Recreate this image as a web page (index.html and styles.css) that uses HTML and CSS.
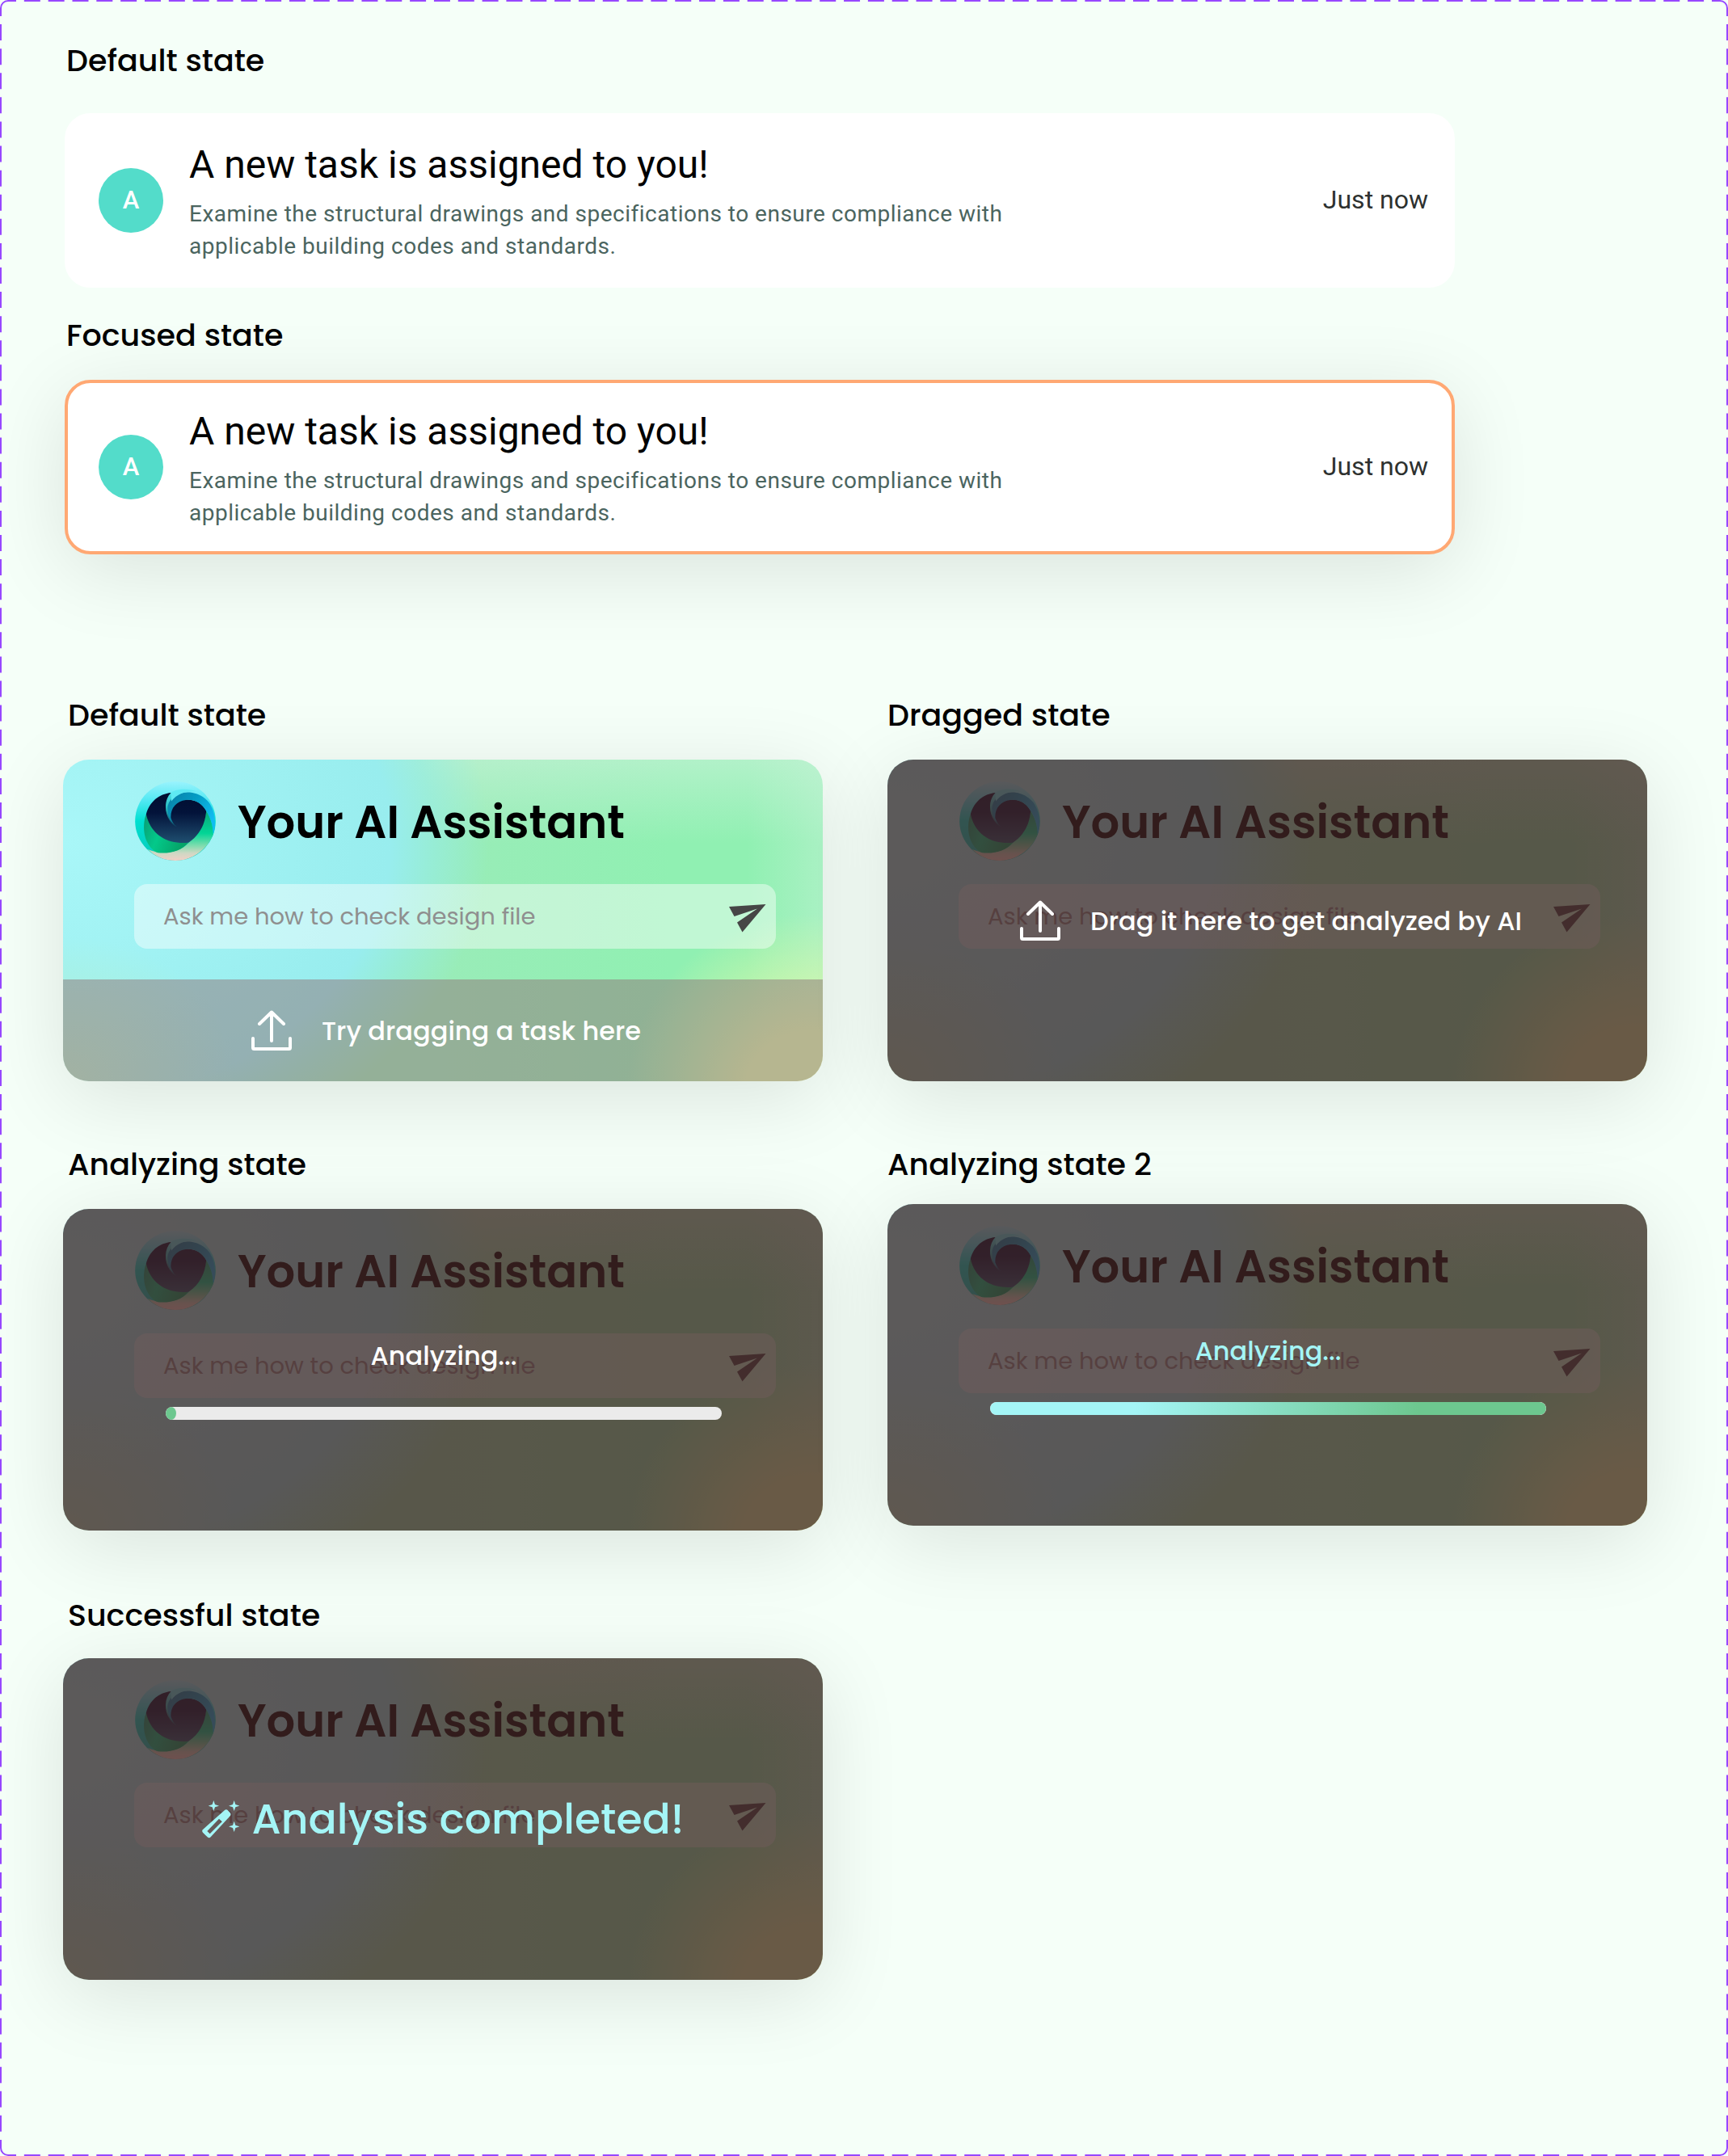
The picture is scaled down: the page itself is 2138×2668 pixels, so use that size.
FILE: index.html
```html
<!DOCTYPE html>
<html lang="en">
<head>
  <meta charset="UTF-8">
  <meta name="viewport" content="width=device-width, initial-scale=1">
  <title>AI Assistant states</title>
  <link rel="stylesheet" href="styles.css">
</head>
<body>
  <!-- Shared icons -->
  <svg class="sprite" aria-hidden="true">
    <defs>
      <linearGradient id="ring" x1="0" y1="0" x2="0" y2="1">
        <stop offset="0" stop-color="#9af3fd"></stop>
        <stop offset="0.25" stop-color="#4fe8f2"></stop>
        <stop offset="0.5" stop-color="#00e0d0"></stop>
        <stop offset="1" stop-color="#08c8b8"></stop>
      </linearGradient>
      <linearGradient id="wave" x1="0" y1="0" x2="1" y2="0.6">
        <stop offset="0" stop-color="#0a7fa6"></stop>
        <stop offset="0.5" stop-color="#049cc4"></stop>
        <stop offset="1" stop-color="#10bdf2"></stop>
      </linearGradient>
      <linearGradient id="leaf" x1="0" y1="0" x2="0" y2="1">
        <stop offset="0" stop-color="#08a878"></stop>
        <stop offset="0.45" stop-color="#02d596"></stop>
        <stop offset="0.7" stop-color="#7fdcae"></stop>
        <stop offset="0.85" stop-color="#cfd8c4"></stop>
        <stop offset="1" stop-color="#f2d0c6"></stop>
      </linearGradient>
      <linearGradient id="leafInner" x1="0" y1="0" x2="1" y2="0.35">
        <stop offset="0" stop-color="#0a9c74"></stop>
        <stop offset="0.45" stop-color="#03c98a"></stop>
        <stop offset="1" stop-color="#05a468"></stop>
      </linearGradient>
      <linearGradient id="navy" x1="0" y1="0" x2="0" y2="1">
        <stop offset="0" stop-color="#000d30"></stop>
        <stop offset="0.4" stop-color="#03133a"></stop>
        <stop offset="1" stop-color="#1f4f70"></stop>
      </linearGradient>
      <linearGradient id="sliver" x1="0" y1="0" x2="0" y2="1">
        <stop offset="0" stop-color="#4fe6ee"></stop>
        <stop offset="0.5" stop-color="#22b5b8"></stop>
        <stop offset="1" stop-color="#0b3a58"></stop>
      </linearGradient>
    </defs>

    <symbol id="logo" viewBox="51 22 300 295">
      <ellipse cx="201" cy="169.500" rx="150" ry="147.500" fill="url(#ring)"></ellipse>
      <path d="M316 132 C334 160 341 190 342 219 C320 275 265 317 201 317 C160 317 125 302 98 275 C150 296 215 290 250 250 C290 215 312 175 316 132 Z" fill="url(#leaf)"></path>
      <path d="M92 145 C80 175 80 225 100 255 C110 272 124 284 136 288 C185 292 222 280 250 250 C175 252 118 215 92 145 Z" fill="url(#leafInner)"></path>
      <path d="M185 64 C140 68 104 98 92 145 C108 215 165 258 250 250 C292 222 312 180 316 132 C300 102 272 88 240 90 C205 92 180 120 184 160 L206 191 Z" fill="url(#navy)"></path>
      <path d="M185 64 C160 88 158 135 180 168 C188 180 197 188 206 191 C190 178 172 150 175 118 C180 90 205 70 240 62 L185 64 Z" fill="url(#sliver)"></path>
      <path d="M206 191 C182 172 168 142 173 112 C181 78 220 60 255 63 C285 66 308 80 326 100 C347 130 356 175 342 219 C341 188 334 160 316 132 C300 102 272 88 240 91 C204 95 182 122 184 158 C188 172 196 184 206 191 Z" fill="url(#wave)"></path>
      <path d="M185 64 C200 50 250 46 280 60 C250 56 210 64 186 96 Z" fill="#5eeaf3"></path>
    </symbol>

    <symbol id="send" viewBox="0 0 46 35">
      <path d="M0 3 L45.500 0 L16.500 34.500 L10 22.500 L35 5.500 L6.500 15 Z" fill="currentColor"></path>
    </symbol>

    <symbol id="upload" viewBox="0 0 50 50">
      <path d="M25 38 V2.500 M10 17 L25 2.500 L40 17 M2 35 V46.500 Q2 48 3.500 48 H46.500 Q48 48 48 46.500 V35" fill="none" stroke="currentColor" stroke-width="4" stroke-linecap="round" stroke-linejoin="round"></path>
    </symbol>

    <symbol id="wand" viewBox="59 53 138 141">
      <path fill="currentColor" fill-rule="evenodd" d="M143 89 Q149 84 154 89 L163 99 Q168 105 163 111 L91 189 Q85 195 79 189 L62 172 Q57 166 62 161 Z M122 121 L78 167 L88 177 L133 132 Z"></path>
      <path fill="currentColor" d="M102 53 L107 68 L122 73 L107 78 L102 92 L97 78 L82 73 L97 68 Z M178 53 L183 68 L198 73 L183 78 L178 92 L173 78 L158 73 L173 68 Z M178 130 L183 145 L198 150 L183 155 L178 170 L173 155 L158 150 L173 145 Z"></path>
    </symbol>
  </svg>

  <main class="board">
    <svg class="outline" viewBox="0 0 2138 2668">
      <line x1="10" y1="1" x2="2128" y2="1" stroke-dasharray="20 9.830" stroke-dashoffset="10"></line>
      <line x1="10" y1="2667" x2="2128" y2="2667" stroke-dasharray="20 9.830" stroke-dashoffset="10"></line>
      <line x1="1" y1="10" x2="1" y2="2658" stroke-dasharray="20 10.090" stroke-dashoffset="10"></line>
      <line x1="2137" y1="10" x2="2137" y2="2658" stroke-dasharray="20 10.090" stroke-dashoffset="10"></line>
      <path d="M1 10 A9 9 0 0 1 10 1 M2128 1 A9 9 0 0 1 2137 10 M2137 2658 A9 9 0 0 1 2128 2667 M10 2667 A9 9 0 0 1 1 2658"></path>
    </svg>

    <!-- Task notification -->
    <section class="notifications">
      <h2>Default state</h2>
      <article class="task">
        <span class="avatar">A</span>
        <div class="task-body">
          <h3>A new task is assigned to you!</h3>
          <p>Examine the structural drawings and specifications to ensure compliance with applicable building codes and standards.</p>
        </div>
        <time>Just now</time>
      </article>

      <h2>Focused state</h2>
      <article class="task focused">
        <span class="avatar">A</span>
        <div class="task-body">
          <h3>A new task is assigned to you!</h3>
          <p>Examine the structural drawings and specifications to ensure compliance with applicable building codes and standards.</p>
        </div>
        <time>Just now</time>
      </article>
    </section>

    <!-- Assistant card -->
    <section class="assistants">
      <div class="column">
        <h2>Default state</h2>
        <article class="assistant">
          <header><svg class="logo"><use href="#logo"></use></svg><h3>Your AI Assistant</h3></header>
          <div class="prompt"><span>Ask me how to check design file</span><svg class="send"><use href="#send"></use></svg></div>
          <footer class="hint"><svg class="upload"><use href="#upload"></use></svg><span>Try dragging a task here</span></footer>
        </article>

        <h2 class="analyzing-title">Analyzing state</h2>
        <article class="assistant">
          <header><svg class="logo"><use href="#logo"></use></svg><h3>Your AI Assistant</h3></header>
          <div class="prompt"><span>Ask me how to check design file</span><svg class="send"><use href="#send"></use></svg></div>
          <div class="overlay progress">
            <span>Analyzing...</span>
            <div class="bar"><div class="fill start"></div></div>
          </div>
        </article>

        <h2 class="success-title">Successful state</h2>
        <article class="assistant">
          <header><svg class="logo"><use href="#logo"></use></svg><h3>Your AI Assistant</h3></header>
          <div class="prompt"><span>Ask me how to check design file</span><svg class="send"><use href="#send"></use></svg></div>
          <div class="overlay done"><svg class="wand"><use href="#wand"></use></svg><span>Analysis completed!</span></div>
        </article>
      </div>

      <div class="column right">
        <h2>Dragged state</h2>
        <article class="assistant">
          <header><svg class="logo"><use href="#logo"></use></svg><h3>Your AI Assistant</h3></header>
          <div class="prompt"><span>Ask me how to check design file</span><svg class="send"><use href="#send"></use></svg></div>
          <div class="overlay drop"><svg class="upload"><use href="#upload"></use></svg><span>Drag it here to get analyzed by AI</span></div>
        </article>

        <h2 class="analyzing-title second">Analyzing state 2</h2>
        <article class="assistant">
          <header><svg class="logo"><use href="#logo"></use></svg><h3>Your AI Assistant</h3></header>
          <div class="prompt"><span>Ask me how to check design file</span><svg class="send"><use href="#send"></use></svg></div>
          <div class="overlay progress finishing">
            <span>Analyzing...</span>
            <div class="bar"><div class="fill full"></div></div>
          </div>
        </article>
      </div>
    </section>
  </main>
</body>
</html>
```
FILE: styles.css
```css
* {
  box-sizing: border-box;
}
body {
  margin: 0;
  background: #f5fff8;
  color: #000;
  font-family: "Poppins", "Inter", sans-serif;
}
h2, h3, p {
  margin: 0;
}
svg {
  display: block;
  flex: none;
}
.sprite {
  position: absolute;
  width: 0;
  height: 0;
}

.board {
  position: relative;
  width: 2138px;
  height: 2668px;
  padding: 45px 100px 0 78px;
}
.outline {
  position: absolute;
  top: 0;
  left: 0;
  width: 100%;
  height: 100%;
  fill: none;
  stroke: #9747ff;
  stroke-width: 2;
}
h2 {
  position: relative;
  z-index: 1;
  font-size: 38px;
  font-weight: 500;
  line-height: 60px;
}

/* Task notification */
.notifications {
  width: 1722px;
  padding-left: 2px;
}
.notifications h2 {
  margin: 29px 0 25px;
  padding-left: 2px;
}
.notifications h2:first-child {
  margin-top: 0;
  margin-bottom: 35px;
}
.task {
  display: flex;
  align-items: center;
  gap: 32px;
  height: 216px;
  padding: 0 29px 0 38px;
  border: 4px solid #fff;
  border-radius: 32px;
  background: #fff;
  font-family: Roboto, sans-serif;
}
.task.focused {
  border-color: #ffa873;
  box-shadow: 0 20px 100px rgba(0, 0, 0, 0.11);
}
.avatar {
  display: flex;
  align-items: center;
  justify-content: center;
  width: 80px;
  height: 80px;
  padding-bottom: 2px;
  border-radius: 50%;
  background: #53dcca;
  color: #fff;
  font-size: 31px;
  font-weight: 500;
}
.task-body {
  flex: 1;
  padding-top: 4px;
}
.task-body h3 {
  font-size: 48px;
  font-weight: 400;
  line-height: 56px;
}
.task-body p {
  width: 1060px;
  margin-top: 13px;
  color: #4b655f;
  font-size: 28px;
  line-height: 40px;
  letter-spacing: 0.5px;
}
.task time {
  padding-bottom: 2px;
  color: #2d312f;
  font-size: 32px;
}

/* Assistant card */
.assistants {
  display: grid;
  grid-template-columns: 940px 940px;
  gap: 80px;
  margin-top: 169px;
}
.column h2 {
  margin-bottom: 25px;
  padding-left: 6px;
}
.column.right h2 {
  padding-left: 0;
}
.column .analyzing-title {
  margin-top: 73px;
}
.column .analyzing-title.second {
  margin-bottom: 19px;
}
.column .success-title {
  margin-top: 75px;
  margin-bottom: 23px;
}
.assistant {
  position: relative;
  display: flex;
  flex-direction: column;
  height: 398px;
  border-radius: 32px;
  background:
    radial-gradient(ellipse 24% 56% at 98% 104%, #dcf8a8 0%, #dcf8a8 35%, rgba(220, 248, 168, 0) 100%),
    radial-gradient(ellipse 23% 45% at 0% 100%, rgba(184, 240, 200, 0.9) 0%, rgba(184, 240, 200, 0) 100%),
    radial-gradient(ellipse 56% 105% at 0% 25%, #a9f7f8 0%, #98edee 77%, rgba(150, 237, 226, 0.7) 87%, rgba(148, 238, 190, 0) 100%),
    linear-gradient(to bottom, rgba(200, 242, 216, 0.6) 0%, rgba(200, 242, 216, 0) 26%),
    linear-gradient(to left, rgba(200, 242, 216, 0.45) 0%, rgba(200, 242, 216, 0) 10%),
    linear-gradient(to right, #99ecb8 50%, #90f0b2 80%);
  box-shadow: 0 20px 100px rgba(0, 0, 0, 0.11);
  overflow: hidden;
}
.assistant header {
  display: flex;
  align-items: center;
  gap: 27px;
  padding: 27px 0 0 89px;
}
.assistant h3 {
  padding-top: 4px;
  font-size: 56px;
  font-weight: 600;
  line-height: 94px;
}
.logo {
  width: 100px;
  height: 98px;
}
.prompt {
  display: flex;
  align-items: center;
  justify-content: space-between;
  width: 794px;
  height: 80px;
  margin: 29px 0 0 88px;
  padding: 1px 12px 0 36px;
  border-radius: 16px;
  background: rgba(255, 255, 255, 0.44);
  color: #8f8f8f;
  font-size: 29px;
}
.send {
  width: 46px;
  height: 35px;
  margin-top: 4px;
  color: #464646;
}
.upload {
  width: 50px;
  height: 50px;
}
.hint {
  display: flex;
  align-items: center;
  justify-content: center;
  gap: 37px;
  height: 126px;
  margin-top: auto;
  padding-left: 8px;
  background: rgba(143, 116, 120, 0.5);
  color: #fff;
  font-size: 32px;
  font-weight: 500;
}

/* Dark layer over the card */
.overlay {
  position: absolute;
  inset: 0;
  display: flex;
  align-items: center;
  background: rgba(67, 37, 37, 0.75);
  color: #fff;
  font-size: 32px;
  font-weight: 500;
}
.hint span,
.drop span {
  padding-top: 2px;
}
.drop {
  justify-content: center;
  gap: 37px;
  padding-left: 9px;
}
.progress {
  flex-direction: column;
  gap: 39px;
  padding: 158px 0 0 2px;
  line-height: 48px;
}
.finishing {
  color: #a4f5f6;
}
.bar {
  width: 688px;
  height: 16px;
  border-radius: 8px;
  background: #ebebeb;
  overflow: hidden;
}
.fill {
  height: 100%;
  border-radius: 8px;
}
.fill.start {
  width: 13px;
  border-radius: 50%;
  background: #6dc78f;
}
.fill.full {
  background: linear-gradient(to right, #a4f5f6 26%, #6dc78f 77%);
}
.done {
  justify-content: center;
  gap: 16px;
  color: #a4f5f6;
  font-size: 52px;
}
.wand {
  width: 46px;
  height: 47px;
}
```
